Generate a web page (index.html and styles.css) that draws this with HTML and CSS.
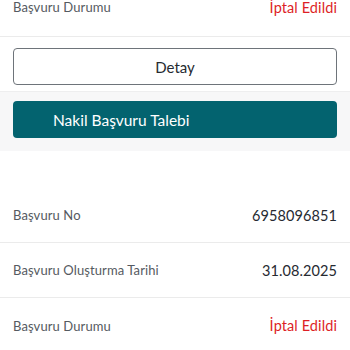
FILE: index.html
```html
<!DOCTYPE html>
<html lang="tr">
<head>
<meta charset="utf-8">
<link rel="stylesheet" href="styles.css">
</head>
<body>
<div class="page">
  <div class="row row-top">
    <span class="label">Başvuru Durumu</span>
    <span class="value red">İptal Edildi</span>
  </div>
  <div class="detail-wrap">
    <button class="btn btn-outline">Detay</button>
  </div>
  <div class="action-wrap">
    <button class="btn btn-teal">Nakil Başvuru Talebi</button>
  </div>
  <div class="list">
    <div class="row">
      <span class="label">Başvuru No</span>
      <span class="value">6958096851</span>
    </div>
    <div class="row">
      <span class="label">Başvuru Oluşturma Tarihi</span>
      <span class="value">31.08.2025</span>
    </div>
    <div class="row row-last">
      <span class="label">Başvuru Durumu</span>
      <span class="value red">İptal Edildi</span>
    </div>
  </div>
</div>
</body>
</html>
```
FILE: styles.css
```css
html, body {
  margin: 0;
  padding: 0;
  background: #ffffff;
  overflow: hidden;
}
.page {
  width: 350px;
  font-family: "Lato", "Noto Sans", sans-serif;
}
.row {
  display: flex;
  justify-content: space-between;
  align-items: center;
  height: 55px;
  padding: 0 13px;
  border-bottom: 1px solid #ebebeb;
  box-sizing: border-box;
}
.row-top {
  margin-top: -19px;
  height: 56px;
  padding-bottom: 3px;
}
.row-last {
  border-bottom: none;
}
.label {
  font-size: 13px;
  color: #555a61;
  letter-spacing: 0.1px;
}
.value {
  font-size: 14.5px;
  color: #262a31;
  letter-spacing: 0.1px;
}
.red {
  color: #dd1f26;
}
.detail-wrap {
  padding: 11px 13px 6px;
  border-bottom: 1px solid #eeeeef;
}
.btn {
  display: block;
  width: 100%;
  height: 37px;
  border-radius: 4px;
  font-family: inherit;
  box-sizing: border-box;
  cursor: pointer;
}
.btn-outline {
  background: #ffffff;
  border: 1.5px solid #6e747a;
  font-size: 15px;
  color: #262a31;
}
.action-wrap {
  background: #f7f7f8;
  padding: 9px 13px 13px;
}
.btn-teal {
  background: #03636f;
  border: none;
  color: #ffffff;
  font-size: 15.5px;
  text-align: left;
  padding-left: 40px;
}
.list {
  margin-top: 37px;
}
```
